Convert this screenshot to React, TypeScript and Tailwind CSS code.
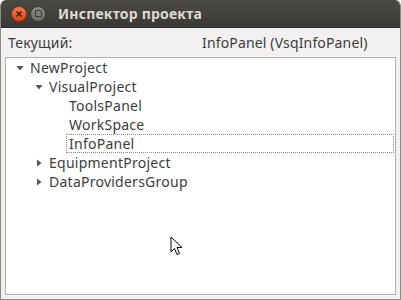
import React from 'react';

type Node = {
  label: string;
  level: number;
  arrow?: 'down' | 'right';
  focused?: boolean;
};

const nodes: Node[] = [
  { label: 'NewProject', level: 0, arrow: 'down' },
  { label: 'VisualProject', level: 1, arrow: 'down' },
  { label: 'ToolsPanel', level: 2 },
  { label: 'WorkSpace', level: 2 },
  { label: 'InfoPanel', level: 2, focused: true },
  { label: 'EquipmentProject', level: 1, arrow: 'right' },
  { label: 'DataProvidersGroup', level: 1, arrow: 'right' },
];

const indent = ['pl-[6px]', 'pl-[25px]', 'pl-[45px]'];

function Arrow({ dir }: { dir?: 'down' | 'right' }) {
  return (
    <span className="w-[15px] h-full flex items-center justify-center shrink-0">
      {dir === 'down' && (
        <svg width="8" height="6" viewBox="0 0 8 6">
          <path d="M0.5 1 L7.5 1 L4 5.5 Z" fill="#555553" />
        </svg>
      )}
      {dir === 'right' && (
        <svg width="6" height="8" viewBox="0 0 6 8">
          <path d="M1 0.5 L5.5 4 L1 7.5 Z" fill="#555553" />
        </svg>
      )}
    </span>
  );
}

function Row({ node }: { node: Node }) {
  return (
    <div className={`h-[19px] flex items-stretch ${indent[node.level]}`}>
      <Arrow dir={node.arrow} />
      <div
        className={`flex-1 mr-[1px] flex items-center pl-[2px] border ${
          node.focused ? 'border-dotted border-[#8a8a8a]' : 'border-transparent'
        }`}
      >
        {node.label}
      </div>
    </div>
  );
}

function Cursor() {
  return (
    <svg
      className="absolute left-[169px] top-[236px]"
      width="14"
      height="21"
      viewBox="0 0 14 21"
    >
      <path
        d="M1 1 L1 16 L4.5 12.5 L7 18.5 L9.5 17.5 L7 11.5 L12 11.5 Z"
        fill="#ffffff"
        stroke="#000000"
        strokeWidth="1"
        strokeLinejoin="round"
      />
    </svg>
  );
}

export default function App() {
  return (
    <div className="w-[401px] h-[300px] bg-white" style={{ fontFamily: '"Noto Sans", "DejaVu Sans", sans-serif' }}>
      <div className="relative w-full h-full flex flex-col rounded-t-[6px] overflow-hidden bg-[#f2f1f0] border-x border-b border-[#8c8a86]">
        {/* Title bar */}
        <div className="h-[28px] shrink-0 flex items-center bg-gradient-to-b from-[#4a4944] to-[#3a3935] border-b border-[#2c2b28]">
          <div className="ml-[10px] w-[16px] h-[16px] rounded-full bg-gradient-to-b from-[#f47a4a] to-[#d8441a] border border-[#8f2f10] flex items-center justify-center">
            <svg width="8" height="8" viewBox="0 0 8 8">
              <path d="M1.5 1.5 L6.5 6.5 M6.5 1.5 L1.5 6.5" stroke="#3a1a0c" strokeWidth="1.6" />
            </svg>
          </div>
          <div className="ml-[3px] w-[16px] h-[16px] rounded-full bg-gradient-to-b from-[#8e8d89] to-[#6c6b67] border border-[#3a3935] flex items-center justify-center">
            <div className="w-[7px] h-[7px] border-[1.5px] border-[#3a3935] rounded-[1px]" />
          </div>
          <span className="ml-[12px] text-[14px] font-bold text-[#dfdbd2] tracking-[0.2px]">Инспектор проекта</span>
        </div>

        {/* Current item */}
        <div className="h-[29px] shrink-0 flex items-center text-[14px] tracking-[0.15px] text-[#3c3c3c]">
          <span className="w-[201px] pl-[7px]">Текущий:</span>
          <span>InfoPanel (VsqInfoPanel)</span>
        </div>

        {/* Tree */}
        <div className="mx-[4px] mb-[4px] flex-1 bg-white border border-[#b5b1ad] text-[14px] tracking-[0.25px] text-[#3c3c3c]">
          {nodes.map((n) => (
            <Row key={n.label} node={n} />
          ))}
        </div>

        <Cursor />
      </div>
    </div>
  );
}
